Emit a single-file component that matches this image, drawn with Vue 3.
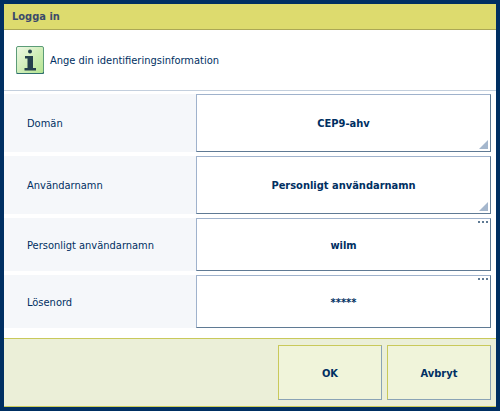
<template>
  <div class="dialog">
    <div class="title">Logga in</div>
    <div class="info">
      <svg class="info-icon" width="28" height="28" viewBox="0 0 28 28">
        <defs>
          <linearGradient id="infoBg" x1="0" y1="0" x2="1" y2="1">
            <stop offset="0" stop-color="#eef8e6" />
            <stop offset="1" stop-color="#b4e48e" />
          </linearGradient>
        </defs>
        <rect x="0.5" y="0.5" width="27" height="27" rx="1.5" fill="url(#infoBg)" stroke="#5c9c78" />
        <path d="M0.5 27.5H27.5V26" fill="none" stroke="#2f6f70" />
        <circle cx="14" cy="5.5" r="2" fill="#24404c" />
        <path d="M9 10H17V22H20V24.5H8.5V22H11.5V12.5H9Z" fill="#24404c" />
      </svg>
      <span>Ange din identifieringsinformation</span>
    </div>
    <div class="rows">
      <div v-for="row in rows" :key="row.label" class="row" :class="row.size">
        <div class="label">{{ row.label }}</div>
        <div class="field">
          {{ row.value }}
          <span v-if="row.kind === 'list'" class="corner"></span>
          <span v-else class="dots"><i></i><i></i><i></i></span>
        </div>
      </div>
    </div>
    <div class="footer">
      <button class="btn">OK</button>
      <button class="btn">Avbryt</button>
    </div>
  </div>
</template>

<script setup>
const rows = [
  { label: 'Domän', value: 'CEP9-ahv', kind: 'list', size: 'tall' },
  { label: 'Användarnamn', value: 'Personligt användarnamn', kind: 'list', size: 'tall' },
  { label: 'Personligt användarnamn', value: 'wilm', kind: 'edit', size: 'short' },
  { label: 'Lösenord', value: '*****', kind: 'edit', size: 'short' },
];
</script>

<style>
html, body {
  margin: 0;
  background: #002f62;
}
</style>

<style scoped>
.dialog {
  box-sizing: border-box;
  width: 500px;
  height: 411px;
  border: 4px solid #002f62;
  background: #fff;
  display: flex;
  flex-direction: column;
  font-family: "DejaVu Sans Condensed", "DejaVu Sans", sans-serif;
  font-size: 11px;
  color: #002f62;
}

.title {
  height: 25px;
  line-height: 25px;
  flex: none;
  padding-left: 8px;
  background: #dddb6e;
  border-bottom: 1px solid #aba756;
  font-weight: bold;
  color: #3b4a6b;
}

.info {
  height: 60px;
  flex: none;
  display: flex;
  align-items: center;
  gap: 6px;
  padding-left: 12px;
  border-bottom: 1px solid #c3cfdd;
}

.info-icon {
  flex: none;
}

.rows {
  flex: none;
  display: flex;
  flex-direction: column;
  gap: 4px;
  padding-top: 3px;
}

.row {
  display: flex;
  background: linear-gradient(#f5f7fa, #f5f7fa) left / 192px 100% no-repeat;
  padding-right: 5px;
}

.row.tall {
  height: 58px;
}

.row.short {
  height: 53px;
}

.label {
  width: 192px;
  flex: none;
  box-sizing: border-box;
  padding-left: 23px;
  display: flex;
  align-items: center;
}

.field {
  flex: 1;
  position: relative;
  box-sizing: border-box;
  display: flex;
  align-items: center;
  justify-content: center;
  background: #fff;
  border: 1px solid #5f7a94;
  border-top-color: #9fb2cc;
  border-left-color: #9fb2cc;
  font-weight: bold;
}

.row.short .label,
.row.short .field {
  padding-top: 1px;
}

.corner {
  position: absolute;
  right: 2px;
  bottom: 2px;
  width: 9px;
  height: 9px;
  background: #a5b7cd;
  clip-path: polygon(100% 0, 100% 100%, 0 100%);
}

.dots {
  position: absolute;
  top: 2px;
  right: 2px;
  display: flex;
  gap: 2px;
}

.dots i {
  width: 2px;
  height: 2px;
  background: #5f7a94;
}

.footer {
  flex: 1;
  margin-top: 10px;
  display: flex;
  justify-content: flex-end;
  align-items: center;
  gap: 5px;
  padding-right: 5px;
  background: #ebefd8;
  border-top: 1px solid #c9c95a;
  border-bottom: 1px solid #c9c95a;
}

.btn {
  width: 104px;
  height: 55px;
  padding: 1px 0 0;
  background: #f0f4da;
  border: 1px solid #c9c95a;
  border-right-color: #8aa3b5;
  border-bottom-color: #8aa3b5;
  font-family: inherit;
  font-size: 11px;
  font-weight: bold;
  color: #002f62;
}
</style>
